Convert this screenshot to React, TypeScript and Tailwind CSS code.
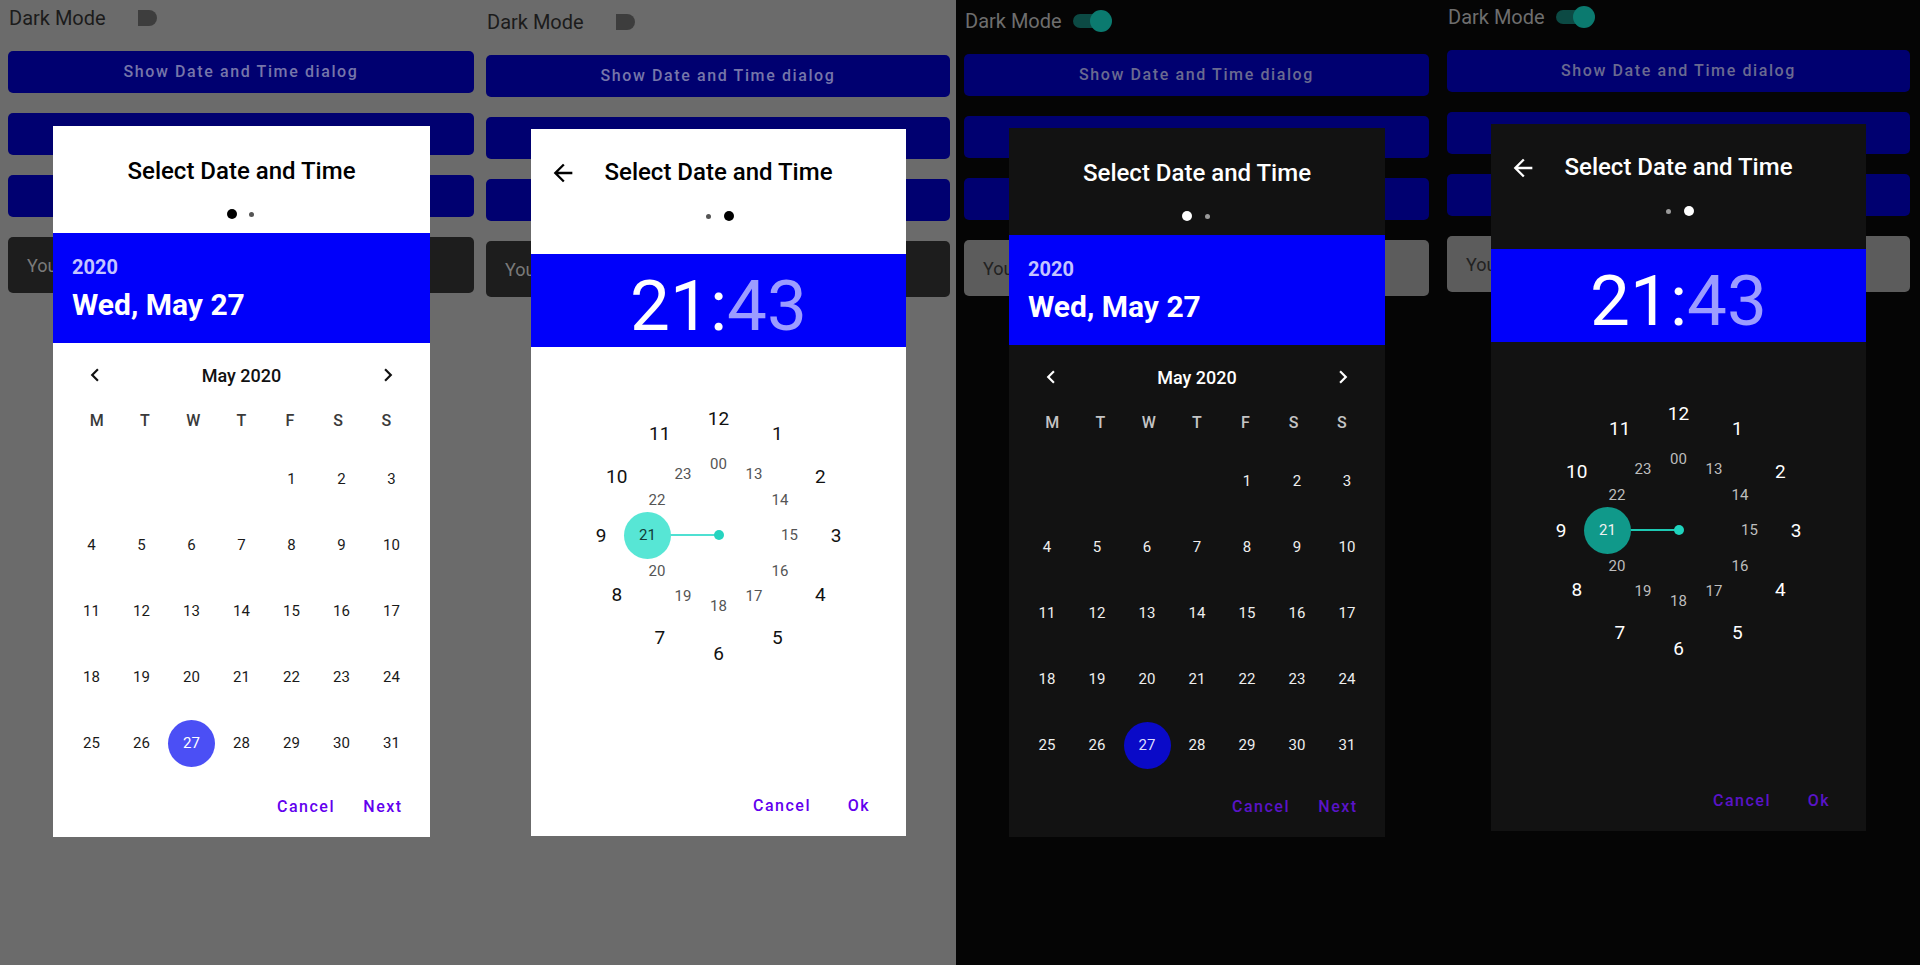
import React from "react";

type Theme = "light" | "dark";

type PanelConfig = {
  theme: Theme;
  step: "date" | "time";
  panelClass: string;
  dialogClass: string;
};

const panels: PanelConfig[] = [
  {
    theme: "light",
    step: "date",
    panelClass: "w-[478px] pt-[4px] pr-[4px] bg-[#6b6b6b]",
    dialogClass: "left-[53px] top-[126px] w-[377px] h-[711px]",
  },
  {
    theme: "light",
    step: "time",
    panelClass: "w-[478px] pt-[8px] pr-[6px] bg-[#6b6b6b]",
    dialogClass: "left-[53px] top-[129px] w-[375px] h-[707px]",
  },
  {
    theme: "dark",
    step: "date",
    panelClass: "w-[483px] pt-[7px] pr-[10px] bg-[#050505]",
    dialogClass: "left-[53px] top-[128px] w-[376px] h-[709px]",
  },
  {
    theme: "dark",
    step: "time",
    panelClass: "w-[481px] pt-[3px] pr-[10px] bg-[#050505]",
    dialogClass: "left-[52px] top-[124px] w-[375px] h-[707px]",
  },
];

function Toggle({ on }: { on: boolean }) {
  return (
    <div className="relative ml-[10px] w-[44px] h-[24px]">
      {on ? (
        <>
          <div className="absolute left-[1px] top-[5px] w-[36px] h-[14px] rounded-full bg-[#0c4a44]" />
          <div className="absolute left-[18px] top-[1px] w-[22px] h-[22px] rounded-full bg-[#0b7a6f]" />
        </>
      ) : (
        <div className="absolute left-[22px] top-[4px] w-[19px] h-[16px] rounded-l-[4px] rounded-r-full bg-[#3d3d3d]" />
      )}
    </div>
  );
}

function Background({ theme }: { theme: Theme }) {
  const dark = theme === "dark";
  return (
    <div className="flex flex-col">
      <div className="flex items-center h-[28px] pl-[1px]">
        <span className={`text-[20px] ${dark ? "text-[#6e6e6e]" : "text-[#1b1b1b]"}`}>
          Dark Mode
        </span>
        <Toggle on={dark} />
      </div>
      <div className="mt-[19px] flex flex-col gap-[20px]">
        <div className="h-[42px] rounded-[5px] bg-[#000070] flex items-center justify-center">
          <span
            className={`text-[16px] font-medium tracking-[1.6px] ${
              dark ? "text-[#6a6a90]" : "text-[#7676aa]"
            }`}
          >
            Show Date and Time dialog
          </span>
        </div>
        <div className="h-[42px] rounded-[5px] bg-[#000070]" />
        <div className="h-[42px] rounded-[5px] bg-[#000070]" />
        <div
          className={`h-[56px] rounded-[5px] flex items-center pl-[19px] ${
            dark ? "bg-[#5c5c5c]" : "bg-[#1d1d1d]"
          }`}
        >
          <span className={`text-[18px] ${dark ? "text-[#222]" : "text-[#7a7a7a]"}`}>You</span>
        </div>
      </div>
    </div>
  );
}

function Dots({ active, dark }: { active: 0 | 1; dark: boolean }) {
  const on = dark ? "bg-white" : "bg-black";
  const off = dark ? "bg-[#9a9a9a]" : "bg-[#555]";
  return (
    <div className="flex items-center justify-center h-[10px]">
      <div className="w-[10px] flex justify-center">
        <div className={active === 0 ? `w-[10px] h-[10px] rounded-full ${on}` : `w-[5px] h-[5px] rounded-full ${off}`} />
      </div>
      <div className="w-[10px]" />
      <div className="w-[10px] flex justify-center">
        <div className={active === 1 ? `w-[10px] h-[10px] rounded-full ${on}` : `w-[5px] h-[5px] rounded-full ${off}`} />
      </div>
    </div>
  );
}

function Actions({ dark, primary }: { dark: boolean; primary: string }) {
  const color = dark ? "text-[#5a14c8]" : "text-[#6200ee]";
  return (
    <div className="flex justify-end gap-[8px] pr-[15px] pb-[12px]">
      <div className={`h-[36px] min-w-[64px] px-[8px] flex items-center justify-center text-[16px] font-medium tracking-[1.5px] ${color}`}>
        Cancel
      </div>
      <div className={`h-[36px] min-w-[64px] px-[8px] flex items-center justify-center text-[16px] font-medium tracking-[1.5px] ${color}`}>
        {primary}
      </div>
    </div>
  );
}

function Chevron({ dir, dark }: { dir: "left" | "right"; dark: boolean }) {
  return (
    <svg width="26" height="26" viewBox="0 0 24 24" className={dark ? "fill-white" : "fill-[#111]"}>
      {dir === "left" ? (
        <path d="M15.41 7.41L14 6l-6 6 6 6 1.41-1.41L10.83 12z" />
      ) : (
        <path d="M8.59 16.59L10 18l6-6-6-6-1.41 1.41L13.17 12z" />
      )}
    </svg>
  );
}

function DateStep({ dark }: { dark: boolean }) {
  const days: (number | null)[] = [null, null, null, null];
  for (let d = 1; d <= 31; d++) days.push(d);
  const weekdays = ["M", "T", "W", "T", "F", "S", "S"];

  return (
    <div className="flex flex-col h-full">
      <div className="pt-[30px] h-[60px] flex items-center justify-center">
        <span className={`text-[24px] font-medium ${dark ? "text-white" : "text-black"}`}>
          Select Date and Time
        </span>
      </div>
      <div className="mt-[23px]">
        <Dots active={0} dark={dark} />
      </div>
      <div className="mt-[14px] h-[110px] bg-[#0000fa] pl-[19px] flex flex-col">
        <span className="mt-[22px] text-[20px] leading-[24px] font-bold text-[#c4c4ff]">2020</span>
        <span className="mt-[9px] text-[30px] leading-[34px] font-bold text-white">Wed, May 27</span>
      </div>
      <div className="pt-[17px] h-[47px] flex items-center justify-between px-[29px]">
        <Chevron dir="left" dark={dark} />
        <span className={`text-[18px] font-medium ${dark ? "text-white" : "text-[#111]"}`}>May 2020</span>
        <Chevron dir="right" dark={dark} />
      </div>
      <div className="mt-[16px] h-[30px] w-[338px] mx-auto grid grid-cols-7">
        {weekdays.map((w, i) => (
          <div
            key={i}
            className={`flex items-center justify-center text-[16px] font-medium ${
              dark ? "text-[#c4c4c4]" : "text-[#3a3a3a]"
            }`}
          >
            {w}
          </div>
        ))}
      </div>
      <div className="mt-[10px] w-[350px] mx-auto grid grid-cols-7">
        {days.map((d, i) => (
          <div key={i} className="h-[66px] flex items-center justify-center">
            {d === 27 ? (
              <div
                className={`w-[47px] h-[47px] rounded-full flex items-center justify-center text-[15px] ${
                  dark ? "bg-[#0a0ac8] text-[#dcdcff]" : "bg-[#4b4ff5] text-white"
                }`}
              >
                27
              </div>
            ) : d ? (
              <span className={`text-[15px] ${dark ? "text-[#eeeeee]" : "text-[#1a1a1a]"}`}>{d}</span>
            ) : null}
          </div>
        ))}
      </div>
      <div className="flex-1" />
      <Actions dark={dark} primary="Next" />
    </div>
  );
}

function Clock({ dark }: { dark: boolean }) {
  const c = 130;
  const outer = 117.5;
  const inner = 71;
  const items: { label: string; r: number; angle: number; inner: boolean }[] = [];
  for (let h = 1; h <= 12; h++) {
    items.push({ label: String(h), r: outer, angle: h * 30, inner: false });
  }
  for (let h = 12; h <= 23; h++) {
    items.push({ label: h === 12 ? "00" : String(h), r: inner, angle: (h - 12) * 30, inner: true });
  }

  return (
    <div className="relative w-[260px] h-[260px] mx-auto">
      <div className={`absolute left-[59px] top-[129px] w-[71px] h-[2px] ${dark ? "bg-[#1ec9b3]" : "bg-[#4fe0d2]"}`} />
      <div className={`absolute left-[125px] top-[125px] w-[10px] h-[10px] rounded-full ${dark ? "bg-[#1fd3bd]" : "bg-[#26d4c0]"}`} />
      <div className={`absolute left-[35.5px] top-[106.5px] w-[47px] h-[47px] rounded-full ${dark ? "bg-[#10998a]" : "bg-[#57e6d5]"}`} />
      {items.map((it) => {
        const rad = (it.angle * Math.PI) / 180;
        const x = c + it.r * Math.sin(rad);
        const y = c - it.r * Math.cos(rad);
        const selected = it.label === "21";
        let color: string;
        if (selected) color = dark ? "text-[#f0f0f0]" : "text-[#123c38]";
        else if (it.inner) color = dark ? "text-[#bdbdbd]" : "text-[#555]";
        else color = dark ? "text-white" : "text-[#111]";
        return (
          <span
            key={it.label}
            className={`absolute -translate-x-1/2 -translate-y-1/2 leading-none ${
              it.inner ? "text-[15px]" : "text-[19px]"
            } ${color}`}
            style={{ left: x, top: y }}
          >
            {it.label}
          </span>
        );
      })}
    </div>
  );
}

function TimeStep({ dark }: { dark: boolean }) {
  return (
    <div className="flex flex-col h-full">
      <div className="relative pt-[28px] h-[58px] flex items-center justify-center">
        <svg
          width="28"
          height="28"
          viewBox="0 0 24 24"
          className={`absolute left-[18px] top-[30px] ${dark ? "fill-white" : "fill-black"}`}
        >
          <path d="M20 11H7.83l5.59-5.59L12 4l-8 8 8 8 1.41-1.41L7.83 13H20v-2z" />
        </svg>
        <span className={`text-[24px] font-medium ${dark ? "text-white" : "text-black"}`}>
          Select Date and Time
        </span>
      </div>
      <div className="mt-[24px]">
        <Dots active={1} dark={dark} />
      </div>
      <div className="mt-[33px] h-[93px] bg-[#0000fa] flex items-center justify-center pt-[9px]">
        <span className="text-[71px] leading-none text-white">
          21:<span className="text-[#9c9cff]">43</span>
        </span>
      </div>
      <div className="mt-[58px]">
        <Clock dark={dark} />
      </div>
      <div className="flex-1" />
      <Actions dark={dark} primary="Ok" />
    </div>
  );
}

function Panel({ cfg }: { cfg: PanelConfig }) {
  const dark = cfg.theme === "dark";
  return (
    <div className={`relative h-full shrink-0 pl-[8px] ${cfg.panelClass}`}>
      <Background theme={cfg.theme} />
      <div className={`absolute ${cfg.dialogClass} ${dark ? "bg-[#121212]" : "bg-white"}`}>
        {cfg.step === "date" ? <DateStep dark={dark} /> : <TimeStep dark={dark} />}
      </div>
    </div>
  );
}

export default function App() {
  return (
    <div className="flex w-[1920px] h-[965px] overflow-hidden bg-[#050505] font-['Roboto',sans-serif]">
      {panels.map((p, i) => (
        <Panel key={i} cfg={p} />
      ))}
    </div>
  );
}
